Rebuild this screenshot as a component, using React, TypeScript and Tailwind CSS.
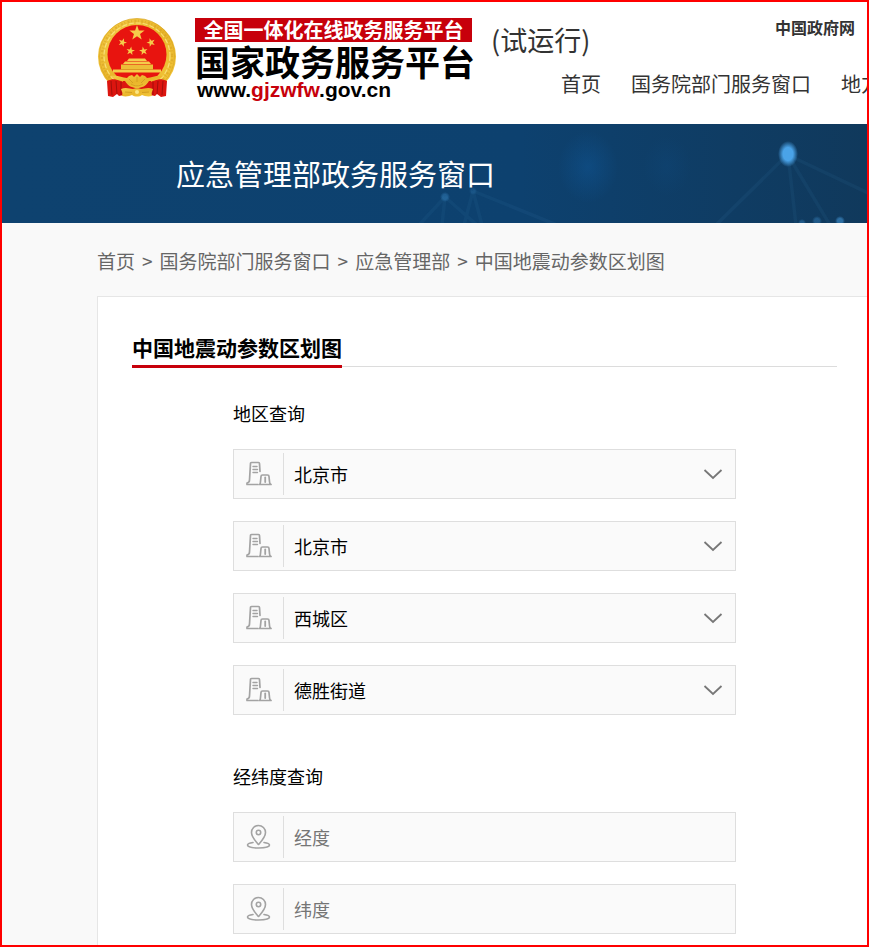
import React from 'react';

const star = (cx: number, cy: number, r: number, turn = 0) =>
  Array.from({ length: 10 }, (_, i) => {
    const a = ((i * 36 - 90 + turn) * Math.PI) / 180;
    const d = i % 2 === 0 ? r : r * 0.4;
    return `${(cx + d * Math.cos(a)).toFixed(2)},${(cy + d * Math.sin(a)).toFixed(2)}`;
  }).join(' ');

function Emblem() {
  return (
    <svg viewBox="0 0 80 84" className="h-[84px] w-20 shrink-0" role="img" aria-label="国徽">
      <defs>
        <linearGradient id="gold" x1="0" y1="0" x2="1" y2="1">
          <stop offset="0" stopColor="#f6cf4a" />
          <stop offset="0.5" stopColor="#e9b52a" />
          <stop offset="1" stopColor="#f4c93c" />
        </linearGradient>
      </defs>
      <ellipse cx="40" cy="38.500" rx="39" ry="38" fill="url(#gold)" />
      <circle cx="40" cy="38" r="35" fill="none" stroke="#cf9a1f" strokeWidth="2.500" strokeDasharray="1 2.300 2 1.600" opacity="0.45" />
      <circle cx="40" cy="38" r="33" fill="none" stroke="#fbe684" strokeWidth="1.200" strokeDasharray="5 2" opacity="0.8" />
      <circle cx="40" cy="38" r="37.500" fill="none" stroke="#d9a524" strokeWidth="1" opacity="0.7" />
      <circle cx="40" cy="36.500" r="29.500" fill="#e8140f" />
      <g fill="#f5cc4a">
        <polygon points={star(40, 15, 8)} />
        <polygon points={star(25.5, 24.5, 4.5, 20)} />
        <polygon points={star(54, 24.5, 4.5, -20)} />
        <polygon points={star(33.5, 33, 4.5, 10)} />
        <polygon points={star(46.5, 33, 4.5, -10)} />
        <path d="m30 43 2-2.500h16l2 2.500ZM26 46l2-2.500h24l2 2.500Z" />
        <path d="M24 46.500h32V51.500H24Z" fill="#edbd38" />
        <path d="M16 51.500h48V54.500H16Z" />
      </g>
      <path d="M24 51.500h32" stroke="#d49a1e" strokeWidth="0.700" />
      <path d="M10 63c6-3 12-2 18 2l-1 12-5 1-2-2-4 3-5-1Z" fill="#dc150f" />
      <path d="M70 63c-6-3-12-2-18 2l1 12 5 1 2-2 4 3 5-1Z" fill="#dc150f" />
      <path d="M26 63h28v12H26Z" fill="#dc150f" />
      <path d="m14 63 1 14m4-14 1 13m4-12v13M66 63l-1 14m-4-14-1 13m-4-12v13" stroke="#9c0f0a" strokeWidth="0.900" fill="none" />
      <path d="M14 58c7-1 11 2 16 2l2-2 3-1 2 2 3-3 3 3 2-2 3 1 2 2c5 0 9-3 16-2-4 4-9 5-14 5-3 5-7 7-12 7s-9-2-12-7c-5 0-10-1-14-5Z" fill="url(#gold)" />
      <path d="m32 61 4 4m4-6v5m8-3-4 4M34 66c4 2.500 8 2.500 12 0" stroke="#cf9a1f" strokeWidth="0.800" fill="none" />
      <path d="M24 71c5-2 9 0 12 0 2-1 6-1 8 0 3 0 7-2 12 0-1 3-2 4-1 7-4 1-8 0-10-1-3 2-7 2-10 0-2 1-6 2-10 1 1-3 0-4-1-7Z" fill="url(#gold)" />
      <path d="m28 74 7 .5m10 0 7-.5" stroke="#cf9a1f" strokeWidth="0.900" />
      <circle cx="40" cy="74" r="2" fill="#fbe684" />
    </svg>
  );
}

function BannerArt() {
  return (
    <svg viewBox="0 0 865 99" preserveAspectRatio="xMaxYMid slice" className="absolute inset-0 h-full w-full" aria-hidden="true">
      <defs>
        <radialGradient id="glow">
          <stop offset="0" stopColor="#0f5390" stopOpacity="0.55" />
          <stop offset="1" stopColor="#0f5390" stopOpacity="0" />
        </radialGradient>
        <radialGradient id="node">
          <stop offset="0.5" stopColor="#4aa3e8" />
          <stop offset="1" stopColor="#4aa3e8" stopOpacity="0" />
        </radialGradient>
      </defs>
      <ellipse cx="586" cy="43" rx="30" ry="36" fill="url(#glow)" />
      <ellipse cx="665" cy="42" rx="24" ry="30" fill="url(#glow)" opacity="0.3" />
      <g stroke="#3f81b4" strokeWidth="3.500" opacity="0.1" fill="none">
        <path d="M785 31 715 100M786 31l8 70M786 31l42 70M786 31l80 38" />
        <path d="m443 73-26 28M443 73l-3 28M443 73l32 28M471 67l-9 34M471 67l9 34M471 67l84 34" />
      </g>
      <ellipse cx="786" cy="30" rx="10" ry="13" fill="url(#node)" />
      <g fill="url(#node)">
        <circle cx="443" cy="73" r="5" opacity="0.3" />
        <circle cx="471" cy="67" r="4" opacity="0.15" />
        <circle cx="838" cy="97" r="5" opacity="0.5" />
        <circle cx="815" cy="97" r="5" opacity="0.3" />
        <circle cx="800" cy="99" r="4" opacity="0.3" />
      </g>
    </svg>
  );
}

function BuildingIcon() {
  return (
    <svg viewBox="0 0 26 26" className="h-[26px] w-[26px]" fill="none" stroke="#a3a3a3" strokeWidth="1.700" strokeLinecap="round" strokeLinejoin="round" aria-hidden="true">
      <path d="M12 23.500H1v-1.500c2-.5 2.500-1 2.500-3L4.500 2.500Q4.500 1.500 5.500 1.500h7Q13.500 1.500 13.500 2.500L14 10.500" />
      <path d="M7 5.500h4M7 8.500h4.500M7 11.500h4.500" strokeWidth="1.400" />
      <path d="M13.500 23.500c1-.5 1-1.500 1-3l.5-5Q15 14 16.500 14h5Q23 14 23 15.500l.5 5c0 1.500.5 2.500 1.500 3Z" />
      <path d="M19.200 16.500v4.500" strokeWidth="1.800" />
    </svg>
  );
}

function PinIcon() {
  return (
    <svg viewBox="0 0 26 26" className="h-[26px] w-[26px]" fill="none" stroke="#a3a3a3" strokeWidth="1.600" strokeLinecap="round" strokeLinejoin="round" aria-hidden="true">
      <path d="M12.500 20.500C9 16.500 5.500 13 5.500 8.500a7 7 0 0 1 14 0c0 4.500-3.500 8-7 12Z" />
      <circle cx="12.500" cy="8.500" r="2.200" />
      <path d="M7 18.500c-3 .5-5.500 1.200-5.500 2.500 0 1.800 5 3 11 3s11-1.200 11-3c0-1.300-2.500-2-5.500-2.500" />
    </svg>
  );
}

function Field({ icon, children }: { icon: React.ReactNode; children: React.ReactNode }) {
  return (
    <div className="relative flex h-[50px] items-center border border-[#dedede] bg-[#fafafa]">
      <span className="flex h-[42px] w-[50px] shrink-0 items-center justify-center border-r border-[#dedede]">{icon}</span>
      {children}
    </div>
  );
}

function SelectField({ label, value }: { label: string; value: string }) {
  return (
    <Field icon={<BuildingIcon />}>
      <select aria-label={label} defaultValue={value} className="h-full w-full appearance-none bg-transparent px-[10px] text-lg text-black outline-none">
        <option>{value}</option>
      </select>
      <svg viewBox="0 0 20 12" className="pointer-events-none absolute right-3 h-3 w-5" fill="none" stroke="#777" strokeWidth="1.800" aria-hidden="true">
        <path d="m1.500 2 8.500 8 8.500-8" />
      </svg>
    </Field>
  );
}

function TextField({ label }: { label: string }) {
  return (
    <Field icon={<PinIcon />}>
      <input type="text" aria-label={label} placeholder={label} className="h-full w-full bg-transparent px-[10px] text-lg text-black outline-none placeholder:text-[#757575]" />
    </Field>
  );
}

const regions = [
  { label: '省', value: '北京市' },
  { label: '市', value: '北京市' },
  { label: '区县', value: '西城区' },
  { label: '街道', value: '德胜街道' },
];

const crumbs = ['首页', '国务院部门服务窗口', '应急管理部', '中国地震动参数区划图'];

export default function App() {
  return (
    <div className="flex min-h-screen flex-col overflow-hidden border-2 border-[#ff0000] bg-[#f9f9f9] font-['Noto_Sans_CJK_SC',sans-serif] text-black">
      <header className="flex h-[122px] bg-white pl-[95px] whitespace-nowrap">
        <div className="flex shrink-0 items-start pt-4">
          <Emblem />
          <div className="ml-[18px] w-[280px]">
            <p className="flex h-6 w-[277px] items-center justify-center bg-[#c7000b] text-xl font-bold text-white">全国一体化在线政务服务平台</p>
            <p className="text-[35px] leading-[38px] font-bold">国家政务服务平台</p>
            <p className="pl-[2px] font-['Liberation_Sans',Arial,sans-serif] text-[21px] leading-5 font-bold">
              www.<span className="text-[#c7000b]">gjzwfw</span>.gov.cn
            </p>
          </div>
        </div>
        <div className="min-w-0 flex-1 pl-4 text-[#333]">
          <div className="flex h-[60px] justify-between pr-3">
            <span className="pt-[18px] text-[27px] leading-10">(试运行)</span>
            <a href="#gov" className="pt-[14px] text-base leading-[22px] font-bold">中国政府网</a>
          </div>
          <nav className="flex gap-[30px] pl-[70px] text-xl leading-[44px]">
            <a href="#home">首页</a>
            <a href="#departments">国务院部门服务窗口</a>
            <a href="#local">地方</a>
          </nav>
        </div>
      </header>

      <div className="relative h-[99px] bg-linear-to-r from-[#0e426f] via-[#0d416f] via-60% to-[#10395c]">
        <BannerArt />
        <h1 className="relative pl-[174px] text-[29px] leading-[98px] text-white">应急管理部政务服务窗口</h1>
      </div>

      <nav className="flex h-[73px] items-center gap-[7px] pt-1 pl-[95px] text-[19px] whitespace-nowrap text-[#666]">
        {crumbs.map((c, i) => (
          <React.Fragment key={c}>
            {i > 0 && <span>&gt;</span>}
            <a href={`#crumb-${i}`}>{c}</a>
          </React.Fragment>
        ))}
      </nav>

      <main className="ml-[95px] flex-1 border-t border-l border-[#e6e6e6] bg-white pt-[34px] pr-[30px] pb-[10px] pl-[34px]">
        <div className="flex h-9 border-b border-[#dcdcdc]">
          <h2 className="h-[37px] border-b-3 border-[#c7000b] text-[21px] leading-8 font-bold">中国地震动参数区划图</h2>
        </div>
        <form className="mx-[101px] max-w-[504px]">
          <fieldset className="flex flex-col gap-[22px]">
            <legend className="pt-8 pb-[22px] text-lg leading-7">地区查询</legend>
            {regions.map((r) => (
              <SelectField key={r.label} label={r.label} value={r.value} />
            ))}
          </fieldset>
          <fieldset className="flex flex-col gap-[22px] pt-4">
            <legend className="pt-[47px] pb-[6px] text-lg leading-7">经纬度查询</legend>
            <TextField label="经度" />
            <TextField label="纬度" />
          </fieldset>
        </form>
      </main>
    </div>
  );
}
